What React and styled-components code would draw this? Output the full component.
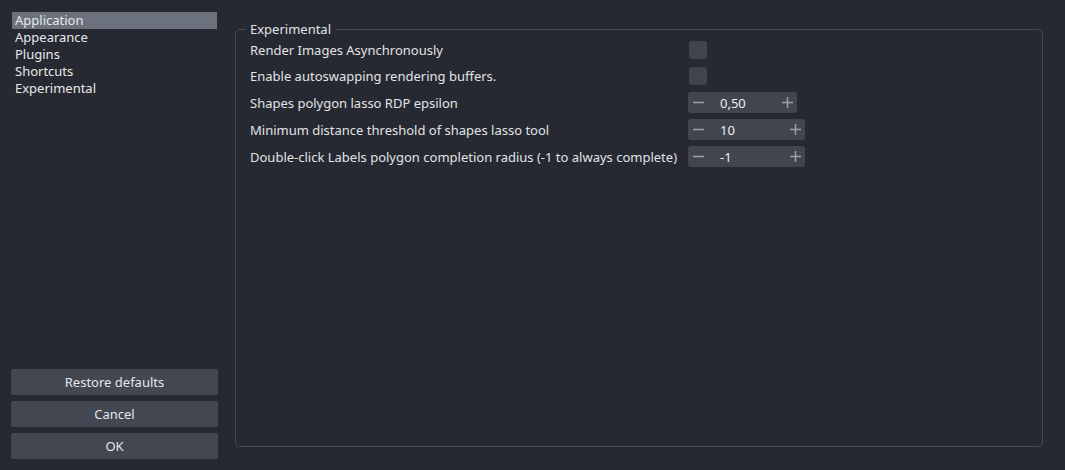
import React from 'react';
import styled, { createGlobalStyle } from 'styled-components';

const GlobalStyle = createGlobalStyle`
  html, body {
    margin: 0;
    padding: 0;
    background: #262931;
  }
  body {
    font-family: "Noto Sans", "DejaVu Sans", sans-serif;
    font-size: 13px;
    color: #e1e3e6;
  }
`;

const Window = styled.div`
  display: flex;
  width: 1065px;
  height: 470px;
  box-sizing: border-box;
  padding: 12px 22px 11px 11px;
  gap: 17px;
  background: #262931;
`;

const Sidebar = styled.aside`
  display: flex;
  flex-direction: column;
  width: 207px;
  flex-shrink: 0;
`;

const NavList = styled.ul`
  list-style: none;
  margin: 0 1px;
  padding: 0;
  flex: 1;
`;

const NavItem = styled.li`
  height: 17px;
  line-height: 16px;
  padding-left: 3px;
  background: ${p => (p.$active ? '#6b727e' : 'transparent')};
  color: #e6e8eb;
  box-sizing: border-box;
`;

const ButtonStack = styled.div`
  display: flex;
  flex-direction: column;
  gap: 6px;
`;

const Button = styled.button`
  height: 26px;
  border: none;
  border-radius: 2px;
  background: #424751;
  color: #e4e6e9;
  font-family: inherit;
  font-size: 13px;
  padding: 0;
`;

const Main = styled.main`
  flex: 1;
  display: flex;
  padding-top: 17px;
  padding-bottom: 12px;
`;

const GroupBox = styled.section`
  position: relative;
  flex: 1;
  border: 1px solid #454952;
  border-radius: 5px;
  padding: 7px 0 0 14px;
`;

const GroupTitle = styled.span`
  position: absolute;
  top: -9px;
  left: 10px;
  padding: 0 4px;
  line-height: 16px;
  background: #262931;
`;

const Form = styled.div`
  display: grid;
  grid-template-columns: 438px auto;
  grid-template-rows: 26px 26px 27px 27px 27px;
  align-items: center;
`;

const Label = styled.span`
  white-space: nowrap;
  line-height: 16px;
`;

const Control = styled.div`
  display: flex;
  align-items: center;
`;

const Check = styled.span`
  display: block;
  width: 18px;
  height: 18px;
  margin-left: 1px;
  border-radius: 3px;
  background: #40444d;
`;

const Spin = styled.div`
  display: flex;
  align-items: center;
  width: ${p => p.$width}px;
  height: 21px;
  border-radius: 3px;
  background: #40454f;
  box-sizing: border-box;
  padding: 0 4px 0 5px;
`;

const SpinValue = styled.span`
  flex: 1;
  padding-left: 16px;
  color: #eceef1;
  line-height: 16px;
`;

const SpinBtn = styled.span`
  display: flex;
  align-items: center;
  height: 21px;
  color: #9da2aa;
`;

const Minus = () => (
  <svg width="11" height="11" viewBox="0 0 11 11">
    <rect x="0" y="4.75" width="11" height="1.5" fill="currentColor" />
  </svg>
);

const Plus = () => (
  <svg width="11" height="11" viewBox="0 0 11 11">
    <rect x="0" y="4.75" width="11" height="1.5" fill="currentColor" />
    <rect x="4.75" y="0" width="1.5" height="11" fill="currentColor" />
  </svg>
);

const SpinBox = ({ value, width }) => (
  <Spin $width={width}>
    <SpinBtn>
      <Minus />
    </SpinBtn>
    <SpinValue>{value}</SpinValue>
    <SpinBtn>
      <Plus />
    </SpinBtn>
  </Spin>
);

const nav = ['Application', 'Appearance', 'Plugins', 'Shortcuts', 'Experimental'];

const rows = [
  { label: 'Render Images Asynchronously', type: 'check' },
  { label: 'Enable autoswapping rendering buffers.', type: 'check' },
  { label: 'Shapes polygon lasso RDP epsilon', type: 'spin', value: '0,50', width: 109 },
  { label: 'Minimum distance threshold of shapes lasso tool', type: 'spin', value: '10', width: 117 },
  {
    label: 'Double-click Labels polygon completion radius (-1 to always complete)',
    type: 'spin',
    value: '-1',
    width: 117,
  },
];

export default function App() {
  return (
    <>
      <GlobalStyle />
      <Window>
        <Sidebar>
          <NavList>
            {nav.map((n, i) => (
              <NavItem key={n} $active={i === 0}>
                {n}
              </NavItem>
            ))}
          </NavList>
          <ButtonStack>
            <Button>Restore defaults</Button>
            <Button>Cancel</Button>
            <Button>OK</Button>
          </ButtonStack>
        </Sidebar>
        <Main>
          <GroupBox>
            <GroupTitle>Experimental</GroupTitle>
            <Form>
              {rows.map(r => (
                <React.Fragment key={r.label}>
                  <Label>{r.label}</Label>
                  <Control>
                    {r.type === 'check' ? <Check /> : <SpinBox value={r.value} width={r.width} />}
                  </Control>
                </React.Fragment>
              ))}
            </Form>
          </GroupBox>
        </Main>
      </Window>
    </>
  );
}
